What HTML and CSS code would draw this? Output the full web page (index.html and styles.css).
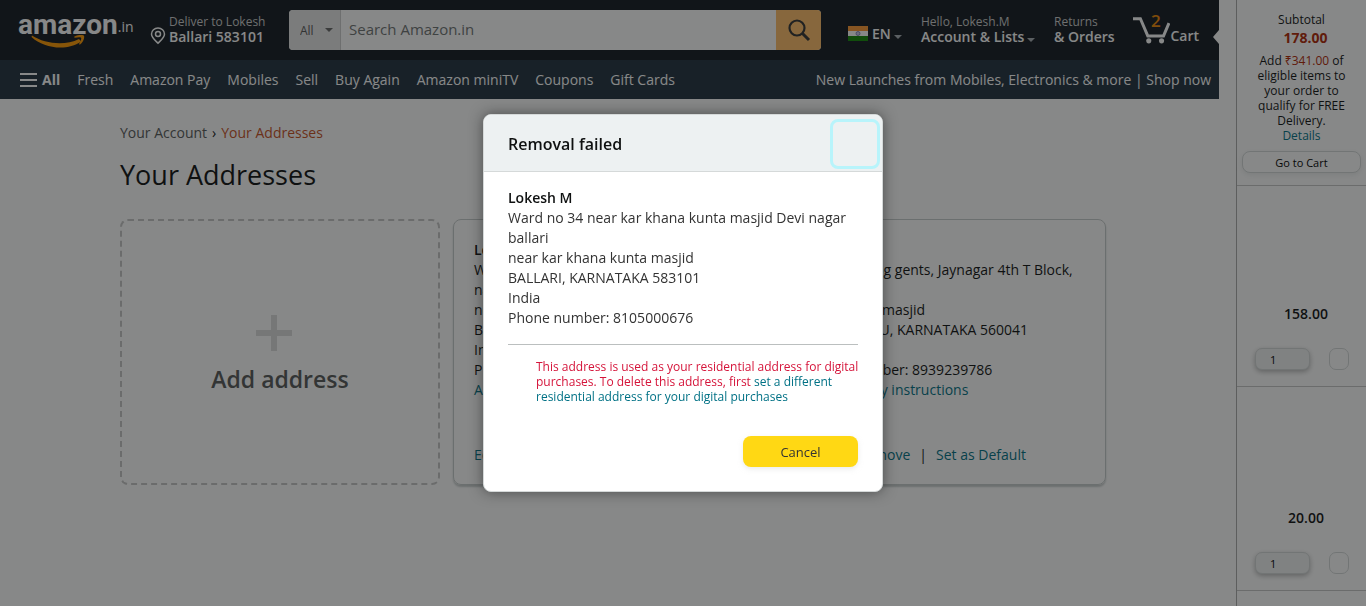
FILE: index.html
```html
<!DOCTYPE html>
<html lang="en">
<head>
<meta charset="utf-8">
<title>Your Addresses</title>
<link rel="stylesheet" href="styles.css">
</head>
<body>
<div class="shell">
  <div class="page">
    <header class="belt">
      <a class="logo" href="#" aria-label="amazon.in">
        <span class="logo-name">amazon</span><span class="logo-tld">.in</span>
        <svg class="logo-smile" viewBox="0 0 56 14" width="56" height="14" aria-hidden="true">
          <path d="M1 0.500C14 9 34 11 48 4L50 6.500C36 16.500 13 13.500 0.500 2Z" fill="#ff9900"/>
          <path d="M43.500 1.500C47 -0.500 52 -0.500 53 0.800C53.800 3 52 7.500 49 9.500C48.300 9.800 48 9.200 48.300 8.500C49.500 6 50.800 3.500 50 2.800C49 2 46 2.500 44 2.800C43.200 2.800 42.800 2 43.500 1.500Z" fill="#ff9900"/>
        </svg>
      </a>
      <a class="deliver" href="#">
        <svg viewBox="0 0 16 18" width="16" height="18" fill="none" stroke="#fff" stroke-width="1.500" aria-hidden="true"><path d="M8 16.200C6 14 1.500 10.800 1.500 7A6.500 6 0 0 1 14.500 7C14.500 10.800 10 14 8 16.200Z"/><circle cx="8" cy="7" r="2.500"/></svg>
        <span class="two-line"><span class="line-1">Deliver to Lokesh</span><span class="line-2">Ballari 583101</span></span>
      </a>
      <form class="search">
        <span class="scope-wrap"><select class="scope" aria-label="Department"><option>All</option></select></span>
        <input class="query" type="text" placeholder="Search Amazon.in" aria-label="Search Amazon.in">
        <button class="go" type="button" aria-label="Search">
          <svg viewBox="0 0 24 24" width="24" height="24" fill="none" stroke="#333" stroke-width="2.200" aria-hidden="true"><circle cx="10" cy="10" r="7.500"/><path d="M15.500 15.500L22 22" stroke-width="3"/></svg>
        </button>
      </form>
      <a class="lang" href="#">
        <svg viewBox="0 0 20 15" width="20" height="15" aria-hidden="true"><path fill="#ff9933" d="M0 0h20v5H0z"/><path fill="#fff" d="M0 5h20v5H0z"/><path fill="#128807" d="M0 10h20v5H0z"/><circle cx="10" cy="7.500" r="2" fill="#c9c9e8" stroke="#6666a8" stroke-width=".7"/></svg>
        <span class="line-2">EN<i class="caret"></i></span>
      </a>
      <a class="account two-line" href="#"><span class="line-1">Hello, Lokesh.M</span><span class="line-2">Account &amp; Lists<i class="caret"></i></span></a>
      <a class="orders two-line" href="#"><span class="line-1">Returns</span><span class="line-2">&amp; Orders</span></a>
      <a class="cart" href="#">
        <svg viewBox="0 0 38 28" width="38" height="28" fill="none" stroke="#fff" stroke-width="3" aria-hidden="true"><path d="M0 2.500h7.500L15 20h16L36.500 7"/><circle cx="16" cy="25" r="2.600" fill="#fff" stroke="none"/><circle cx="29" cy="25" r="2.600" fill="#fff" stroke="none"/></svg>
        <span class="cart-count">2</span>
        <span class="line-2">Cart</span>
      </a>
      <span class="notch"></span>
    </header>
    <nav class="links">
      <a class="all" href="#"><svg viewBox="0 0 17 14" width="17" height="14" aria-hidden="true"><path fill="#fff" d="M0 0h17v2H0zM0 6h17v2H0zM0 12h17v2H0z"/></svg>All</a>
      <a href="#">Fresh</a>
      <a href="#">Amazon Pay</a>
      <a href="#">Mobiles</a>
      <a href="#">Sell</a>
      <a href="#">Buy Again</a>
      <a href="#">Amazon miniTV</a>
      <a href="#">Coupons</a>
      <a href="#">Gift Cards</a>
      <a class="promo" href="#">New Launches from Mobiles, Electronics &amp; more | Shop now</a>
    </nav>
    <main class="content">
      <div class="crumbs"><a href="#">Your Account</a><span>›</span><span class="here">Your Addresses</span></div>
      <h1>Your Addresses</h1>
      <div class="cards">
        <a class="card add" href="#">
          <svg viewBox="0 0 36 36" width="36" height="36" aria-hidden="true"><path fill="#ddd" d="M15 0h6v15h15v6H21v15h-6V21H0v-6h15z"/></svg>
          <span>Add address</span>
        </a>
        <section class="card">
          <address><b>Lokesh M</b><br>Ward no 34 near kar khana kunta masjid Devi<br>nagar ballari<br>near kar khana kunta masjid<br>BALLARI, KARNATAKA 583101<br>India<br>Phone number: 8105000676</address>
          <a href="#">Add delivery instructions</a>
          <div class="actions"><a href="#">Edit</a><i>|</i><a href="#">Remove</a><i>|</i><a href="#">Set as Default</a></div>
        </section>
        <section class="card">
          <address><b>Lokesh M</b><br>Shri Balaji pg gents, Jaynagar 4th T Block,<br>Bengaluru<br>Near Jamia masjid<br>BENGALURU, KARNATAKA 560041<br>India<br>Phone number: 8939239786</address>
          <a href="#">Add delivery instructions</a>
          <div class="actions"><a href="#">Edit</a><i>|</i><a href="#">Remove</a><i>|</i><a href="#">Set as Default</a></div>
        </section>
      </div>
    </main>
  </div>
  <aside class="basket">
    <div class="summary">
      <div>Subtotal</div>
      <div class="total">178.00</div>
      <p>Add <span class="red">₹341.00</span> of eligible items to your order to qualify for FREE Delivery.</p>
      <a href="#">Details</a>
      <button class="to-cart" type="button">Go to Cart</button>
    </div>
    <div class="item">
      <b>158.00</b>
      <div class="controls"><select aria-label="Quantity"><option>1</option></select><button type="button" aria-label="Delete item"></button></div>
    </div>
    <div class="item tall">
      <b>20.00</b>
      <div class="controls"><select aria-label="Quantity"><option>1</option></select><button type="button" aria-label="Delete item"></button></div>
    </div>
  </aside>
</div>
<div class="overlay">
  <div class="modal" role="dialog" aria-modal="true" aria-labelledby="modal-title">
    <div class="modal-head"><h2 id="modal-title">Removal failed</h2><button class="close" type="button" aria-label="Close"></button></div>
    <div class="modal-body">
      <address><b>Lokesh M</b><br>Ward no 34 near kar khana kunta masjid Devi nagar ballari<br>near kar khana kunta masjid<br>BALLARI, KARNATAKA 583101<br>India<br>Phone number: 8105000676</address>
      <p class="alert">This address is used as your residential address for digital purchases. To delete this address, first <a href="#">set a different residential address for your digital purchases</a></p>
      <button class="cancel" type="button">Cancel</button>
    </div>
  </div>
</div>
</body>
</html>
```
FILE: styles.css
```css
* { box-sizing: border-box; }
body {
  margin: 0;
  font: 14px/20px "Open Sans", "Noto Sans", sans-serif;
  color: #0f1111;
  background: #fff;
  overflow: hidden;
}
a { color: #007185; text-decoration: none; }
b { font-weight: 600; }
button, input, select { font-family: inherit; }
address { font-style: normal; }

.shell { display: flex; gap: 17px; height: 100vh; }
.page { flex: 1; min-width: 0; }

/* top bar */
.belt {
  position: relative;
  display: flex;
  align-items: center;
  height: 60px;
  padding: 0 20px 0 18px;
  background: #131921;
}
.belt a { color: #fff; }
.logo { position: relative; display: flex; width: 132px; height: 36px; line-height: 28px; }
.logo-name { font: bold 28px/26px Roboto, "Open Sans", sans-serif; }
.logo-tld { font-size: 14px; line-height: 30px; }
.logo-smile { position: absolute; left: 13px; top: 23px; }
.deliver { display: flex; align-items: flex-end; gap: 3px; width: 139px; }
.two-line { display: flex; flex-direction: column; padding-bottom: 1px; white-space: nowrap; }
.line-1 { font-size: 12px; line-height: 14px; color: #ccc; }
.line-2 { font-size: 14px; font-weight: 600; line-height: 15px; white-space: nowrap; }
.caret {
  display: inline-block;
  margin-left: 3px;
  border: 4px solid transparent;
  border-top-color: #a7acb2;
  border-bottom: 0;
}
.search {
  display: flex;
  flex: 1;
  height: 40px;
  margin-right: 27px;
  border-radius: 4px;
  overflow: hidden;
  background: #fff;
}
.scope-wrap { position: relative; display: flex; }
.scope-wrap::after {
  content: "";
  position: absolute;
  right: 8px;
  top: 18px;
  border: 4px solid transparent;
  border-top-color: #666;
  border-bottom: 0;
}
.scope {
  appearance: none;
  width: 52px;
  padding: 0 0 0 11px;
  border: 0;
  border-right: 1px solid #cdcdcd;
  background: #e6e6e6;
  color: #555;
  font-size: 12px;
}
.query { flex: 1; min-width: 0; border: 0; padding: 0 8px 3px; background: #fff; font-size: 15px; }
.query::placeholder { color: #6f7373; opacity: 1; }
.go { display: flex; align-items: center; justify-content: center; width: 45px; padding: 0; border: 0; background: #febd69; }
.lang { display: flex; align-items: flex-end; gap: 4px; width: 73px; padding-top: 7px; }
.account { width: 133px; }
.orders { width: 79px; }
.cart { position: relative; display: flex; align-items: center; width: 66px; }
.cart .line-2 { margin-top: 11px; }
.cart-count { position: absolute; left: 18px; top: -5px; font-size: 17px; font-weight: 600; color: #f08804; }
.notch {
  position: absolute;
  right: 0;
  top: 30px;
  border: 7px solid transparent;
  border-right: 6px solid #fff;
  border-left: 0;
}

/* link bar */
.links {
  display: flex;
  align-items: center;
  gap: 17px;
  height: 39px;
  padding: 0 8px 0 20px;
  background: #20313f;
  white-space: nowrap;
}
.links a { color: #fff; }
.links .all { display: flex; align-items: center; gap: 5px; font-weight: 700; }
.links .promo { margin-left: auto; }

/* addresses */
.content { padding: 24px 113px 0 120px; }
.crumbs { display: flex; gap: 5px; }
.crumbs a { color: #565959; }
.crumbs .here { color: #c7511f; }
h1 { margin: 14px 0 26px; font-size: 27px; line-height: 36px; font-weight: 400; }
.cards { display: grid; grid-template-columns: repeat(3, 1fr); gap: 13px; }
.card {
  display: flex;
  flex-direction: column;
  min-width: 0;
  min-height: 266px;
  padding: 20px 0 19px 20px;
  border: 1px solid #c7cccc;
  border-radius: 8px;
  box-shadow: 0 2px 2px #c7cccc;
  white-space: nowrap;
}
.card.add {
  align-items: center;
  justify-content: center;
  gap: 12px;
  padding: 26px 0 20px;
  border: 2px dashed #c7c7c7;
  box-shadow: none;
  color: #565959;
  font-size: 23px;
  line-height: 32px;
  font-weight: 600;
}
.card.add svg { margin-right: 12px; }
.card .actions { display: flex; gap: 9px; margin-top: auto; }
.actions i { font-style: normal; }

/* basket */
.basket { width: 130px; border-left: 1px solid #aaa; font-size: 12px; line-height: 15px; text-align: center; }
.summary { padding: 12px 5px; border-bottom: 1px solid #c7c7c7; }
.summary p { margin: 5px 12px 0; }
.total { margin-top: 1px; padding-left: 8px; font-size: 14px; line-height: 20px; font-weight: 700; color: #b12704; }
.red { color: #b12704; }
.to-cart {
  display: block;
  width: 100%;
  height: 22px;
  margin-top: 8px;
  padding: 0;
  border: 1px solid #d5d9d9;
  border-radius: 8px;
  background: #fff;
  box-shadow: 0 2px 5px rgba(213, 217, 217, .5);
  font-size: 11px;
}
.item { padding: 118px 17px 15px 18px; border-bottom: 1px solid #c7c7c7; }
.item.tall { padding-top: 121px; }
.item b { display: block; padding-left: 8px; font-size: 14px; line-height: 20px; font-weight: 600; }
.controls { display: flex; justify-content: space-between; margin-top: 24px; }
.controls select {
  appearance: none;
  width: 55px;
  height: 22px;
  margin-bottom: 1px;
  padding: 0 14px;
  border: 1px solid #d5d9d9;
  border-radius: 7px;
  background: #f0f2f2;
  box-shadow: 0 2px 5px rgba(15, 17, 17, .3);
  font-size: 11px;
}
.controls button { width: 20px; height: 22px; padding: 0; border: 1px solid #d5d9d9; border-radius: 7px; background: #fff; }

/* dialog */
.overlay {
  position: fixed;
  inset: 0;
  display: flex;
  align-items: center;
  justify-content: center;
  background: rgba(15, 17, 17, .5);
}
.modal {
  width: 400px;
  border: 1px solid #d5d9d9;
  border-radius: 8px;
  background: #fff;
  box-shadow: 0 0 14px rgba(15, 17, 17, .5);
  overflow: hidden;
}
.modal-head {
  display: flex;
  align-items: center;
  justify-content: space-between;
  height: 57px;
  padding: 2px 2px 0 24px;
  background: #edf1f2;
  border-bottom: 1px solid #d5d9d9;
}
.modal-head h2 { margin: 0; font-size: 16px; line-height: 24px; font-weight: 600; }
.close { width: 50px; height: 50px; border: 3px solid #b8f4fb; border-radius: 8px; background: none; }
.modal-body { padding: 16px 24px 24px; color: #333; }
.modal-body address { padding-bottom: 16px; border-bottom: 1px solid #bbbfbf; }
.modal-body b { color: #0f1111; }
.alert { margin: 14px -8px 32px 0; padding: 0 0 0 28px; font-size: 12px; line-height: 15px; color: #d5143a; }
.cancel {
  display: block;
  width: 115px;
  height: 31px;
  margin-left: auto;
  border: 0;
  border-radius: 8px;
  background: #ffd814;
  box-shadow: 0 2px 5px rgba(213, 217, 217, .5);
  font-size: 13px;
  color: #333;
}
```
